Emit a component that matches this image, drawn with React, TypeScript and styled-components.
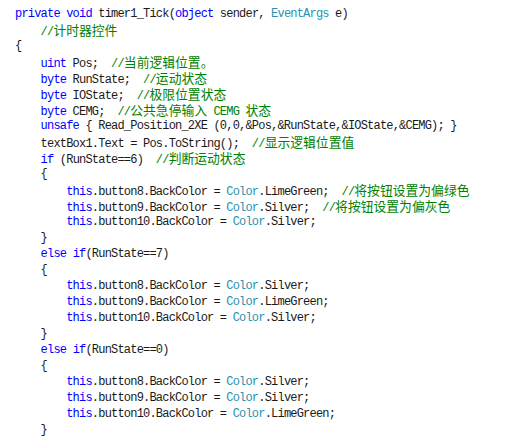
import React from "react";
import styled, { createGlobalStyle } from "styled-components";

const GlobalStyle = createGlobalStyle`
  html, body {
    margin: 0;
    padding: 0;
    background: #ffffff;
  }
`;

type Kind = "k" | "t" | "c" | "p";
type Tok = [Kind, string];

const Page = styled.div`
  width: 508px;
  height: 442px;
  background: #ffffff;
  overflow: hidden;
  padding: 6px 0 0 15px;
  box-sizing: border-box;
`;

const CodeBlock = styled.div`
  display: flex;
  flex-direction: column;
  font-family: "Liberation Mono", "DejaVu Sans Mono", monospace;
  font-size: 12px;
  letter-spacing: -0.8px;
  white-space: pre;
  color: #1a1a1a;
`;

const Line = styled.div`
  height: 16px;
  line-height: 16px;
`;

const colors: Record<Kind, string> = {
  k: "#0000ff",
  t: "#2b91af",
  c: "#008000",
  p: "#1a1a1a",
};

const Token = styled.span<{ $kind: Kind }>`
  color: ${(p) => colors[p.$kind]};
`;

const Cjk = styled.span`
  font-family: "Noto Sans CJK SC", sans-serif;
  font-size: 12.8px;
  letter-spacing: 0;
`;

const sp = (n: number): Tok => ["p", " ".repeat(n)];

const lines: Tok[][] = [
  [["k", "private"], ["p", " "], ["k", "void"], ["p", " timer1_Tick("], ["k", "object"], ["p", " sender, "], ["t", "EventArgs"], ["p", " e)"]],
  [sp(4), ["c", "//计时器控件"]],
  [["p", "{"]],
  [sp(4), ["k", "uint"], ["p", " Pos;  "], ["c", "//当前逻辑位置。"]],
  [sp(4), ["k", "byte"], ["p", " RunState;  "], ["c", "//运动状态"]],
  [sp(4), ["k", "byte"], ["p", " IOState;  "], ["c", "//极限位置状态"]],
  [sp(4), ["k", "byte"], ["p", " CEMG;  "], ["c", "//公共急停输入 CEMG 状态"]],
  [sp(4), ["k", "unsafe"], ["p", " { Read_Position_2XE (0,0,&Pos,&RunState,&IOState,&CEMG); }"]],
  [sp(4), ["p", "textBox1.Text = Pos.ToString();  "], ["c", "//显示逻辑位置值"]],
  [sp(4), ["k", "if"], ["p", " (RunState==6)  "], ["c", "//判断运动状态"]],
  [sp(4), ["p", "{"]],
  [sp(8), ["k", "this"], ["p", ".button8.BackColor = "], ["t", "Color"], ["p", ".LimeGreen;  "], ["c", "//将按钮设置为偏绿色"]],
  [sp(8), ["k", "this"], ["p", ".button9.BackColor = "], ["t", "Color"], ["p", ".Silver;  "], ["c", "//将按钮设置为偏灰色"]],
  [sp(8), ["k", "this"], ["p", ".button10.BackColor = "], ["t", "Color"], ["p", ".Silver;"]],
  [sp(4), ["p", "}"]],
  [sp(4), ["k", "else"], ["p", " "], ["k", "if"], ["p", "(RunState==7)"]],
  [sp(4), ["p", "{"]],
  [sp(8), ["k", "this"], ["p", ".button8.BackColor = "], ["t", "Color"], ["p", ".Silver;"]],
  [sp(8), ["k", "this"], ["p", ".button9.BackColor = "], ["t", "Color"], ["p", ".LimeGreen;"]],
  [sp(8), ["k", "this"], ["p", ".button10.BackColor = "], ["t", "Color"], ["p", ".Silver;"]],
  [sp(4), ["p", "}"]],
  [sp(4), ["k", "else"], ["p", " "], ["k", "if"], ["p", "(RunState==0)"]],
  [sp(4), ["p", "{"]],
  [sp(8), ["k", "this"], ["p", ".button8.BackColor = "], ["t", "Color"], ["p", ".Silver;"]],
  [sp(8), ["k", "this"], ["p", ".button9.BackColor = "], ["t", "Color"], ["p", ".Silver;"]],
  [sp(8), ["k", "this"], ["p", ".button10.BackColor = "], ["t", "Color"], ["p", ".LimeGreen;"]],
  [sp(4), ["p", "}"]],
];

const cjkRe = /([\u3000-\u303f\u4e00-\u9fff\uff00-\uffef]+)/;

function renderText(text: string) {
  return text.split(cjkRe).map((part, i) =>
    i % 2 === 1 ? <Cjk key={i}>{part}</Cjk> : part
  );
}

export default function App() {
  return (
    <>
      <GlobalStyle />
      <Page>
        <CodeBlock>
          {lines.map((line, li) => (
            <Line key={li}>
              {line.map(([kind, text], ti) => (
                <Token key={ti} $kind={kind}>
                  {renderText(text)}
                </Token>
              ))}
            </Line>
          ))}
        </CodeBlock>
      </Page>
    </>
  );
}
